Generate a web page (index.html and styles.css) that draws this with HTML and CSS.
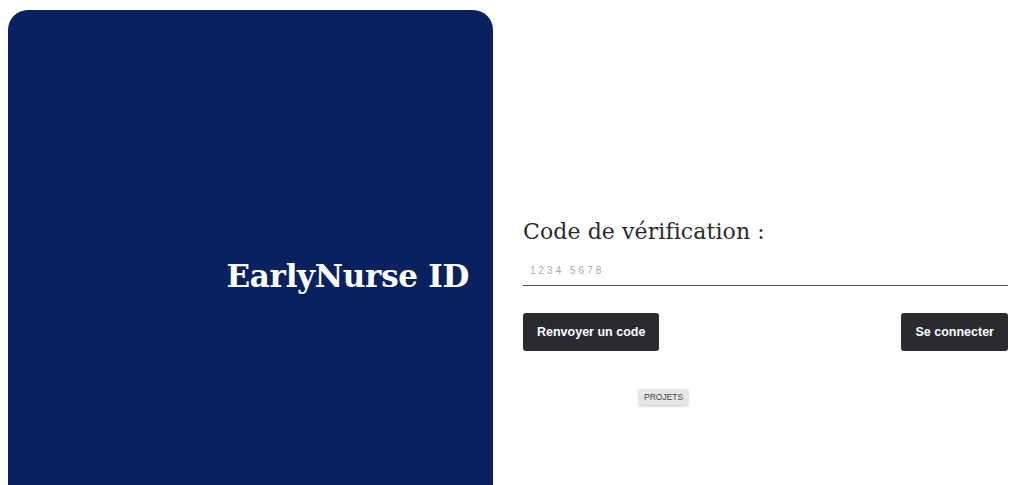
FILE: index.html
```html
<!DOCTYPE html>
<html lang="fr">
<head>
<meta charset="utf-8">
<title>EarlyNurse ID</title>
<link rel="stylesheet" href="styles.css">
</head>
<body>
<div class="page">
  <aside class="brand-panel">
    <h1 class="brand-title">EarlyNurse ID</h1>
  </aside>
  <main class="form-col">
    <h2 class="form-title">Code de vérification :</h2>
    <input class="code-input" type="text" placeholder="1234 5678">
    <div class="actions">
      <button class="btn">Renvoyer un code</button>
      <button class="btn">Se connecter</button>
    </div>
    <div class="tag-row"><span class="tag">PROJETS</span></div>
  </main>
</div>
</body>
</html>
```
FILE: styles.css
```css
html, body {
  margin: 0;
  padding: 0;
  background: #ffffff;
  overflow: hidden;
}
.page {
  display: flex;
  height: 485px;
  overflow: hidden;
  padding: 10px 16px 0 8px;
  box-sizing: border-box;
}
.brand-panel {
  width: 485px;
  flex: none;
  height: 560px;
  background: #0a2160;
  border-radius: 20px;
  display: flex;
  align-items: center;
  justify-content: flex-end;
  padding: 0 24px 40px 0;
  box-sizing: border-box;
}
.brand-title {
  margin: 0;
  padding-top: 12px;
  color: #ffffff;
  font-family: "DejaVu Serif", "Liberation Serif", serif;
  font-weight: bold;
  font-size: 31px;
  letter-spacing: -0.3px;
}
.form-col {
  flex: 1;
  margin-left: 30px;
  padding-top: 206px;
  display: flex;
  flex-direction: column;
}
.form-title {
  margin: 0;
  font-family: "DejaVu Serif", "Liberation Serif", serif;
  font-weight: normal;
  font-size: 22px;
  letter-spacing: 0.1px;
  color: #2a2a30;
  line-height: 32px;
}
.code-input {
  margin-top: 9px;
  border: none;
  border-bottom: 1px solid #555;
  outline: none;
  padding: 3px 0 4px 7px;
  height: 29px;
  box-sizing: border-box;
  font-family: "Liberation Sans", Arial, sans-serif;
  font-size: 10px;
  letter-spacing: 3px;
  color: #333;
  background: transparent;
}
.code-input::placeholder {
  color: #aaaaaa;
}
.actions {
  display: flex;
  justify-content: space-between;
  margin-top: 27px;
}
.btn {
  height: 38px;
  padding: 0 14px;
  border: none;
  border-radius: 3px;
  background: #2a2a31;
  color: #ffffff;
  font-family: "Liberation Sans", Arial, sans-serif;
  font-weight: bold;
  font-size: 12.5px;
  cursor: pointer;
}
.btn-wide {
  padding: 0 16px;
}
.tag-row {
  display: flex;
  margin-top: 38px;
  padding-left: 116px;
}
.tag {
  display: block;
  padding: 3px 5px;
  height: 16px;
  box-sizing: border-box;
  background: #e6e6e6;
  border-radius: 2px;
  box-shadow: 0 1px 3px rgba(0,0,0,0.25);
  font-family: "Liberation Sans", Arial, sans-serif;
  font-size: 8.5px;
  color: #444;
  line-height: 10px;
}
```
